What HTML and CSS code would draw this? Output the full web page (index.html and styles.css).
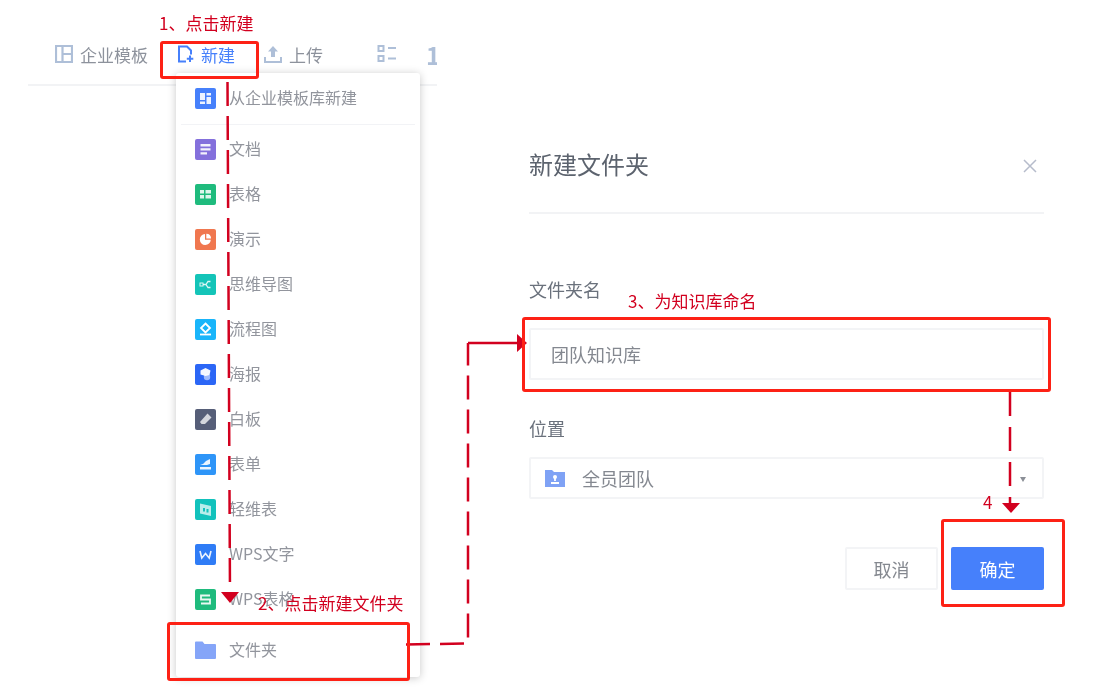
FILE: index.html
```html
<!DOCTYPE html>
<html lang="zh-CN">
<head>
  <meta charset="UTF-8">
  <title>新建文件夹</title>
  <link rel="stylesheet" href="styles.css">
</head>
<body>
<div class="stage">
  <div class="app">
    <!-- Left: toolbar and dropdown -->
    <section class="left">
      <div class="toolbar">
        <span class="tool">
          <svg width="18" height="18" viewBox="0 0 18 18"><path d="M1 1h16v16H1zM7.500 1v16M7.500 9H17" fill="none" stroke="#aebfd8" stroke-width="2.200"/></svg>
          企业模板
        </span>
        <span class="tool tool-new">
          <svg width="18" height="18" viewBox="0 0 18 18"><path d="M9 16.500H2V1.500h8l4 4v4" fill="none" stroke="#4680fb" stroke-width="2"/><path d="M13 10.500v6.500M9.800 13.700h6.500" stroke="#4680fb" stroke-width="2"/></svg>
          新建
        </span>
        <span class="tool tool-upload">
          <svg width="18" height="18" viewBox="0 0 18 18"><path d="M9 1l5 5.500h-3V12H7V6.500H4z" fill="#aebfd8"/><path d="M1 12v5h16v-5" fill="none" stroke="#aebfd8" stroke-width="2"/></svg>
          上传
        </span>
        <i class="tool-sep"></i>
        <svg class="tool-list" width="20" height="20" viewBox="0 0 20 20"><path d="M1.500 2h5v5h-5zM1.500 12h5v5h-5z" fill="none" stroke="#aebfd8" stroke-width="2"/><path d="M11 4h8M11 14.500h8" stroke="#aebfd8" stroke-width="2.200"/></svg>
        <span class="tool-sort">1</span>
      </div>

      <div class="menu">
        <div class="menu-row">
          <svg class="tile" viewBox="0 0 21 21"><rect width="21" height="21" rx="2" fill="#4680fb"/><path d="M5 5h5v7H5zM5 13.500h5V16H5zM11.500 5H16v2.500h-4.500zM11.500 9H16v7h-4.500z" fill="#fff" opacity=".9"/></svg>
          从企业模板库新建
        </div>
        <div class="menu-line"></div>
        <div class="menu-row">
          <svg class="tile" viewBox="0 0 21 21"><rect width="21" height="21" rx="2" fill="#8470dc"/><path d="M5.500 5h10v2.500h-10zM5.500 9.300h10v2.200h-10zM5.500 13.300h6.500v2.200H5.500z" fill="#fff" opacity=".9"/></svg>
          文档
        </div>
        <div class="menu-row">
          <svg class="tile" viewBox="0 0 21 21"><rect width="21" height="21" rx="2" fill="#1fbb7d"/><path d="M5 6h4v3.500H5zM10.500 6H16v3.500h-5.500zM5 11h4v3.500H5zM10.500 11H16v3.500h-5.500z" fill="#fff" opacity=".85"/></svg>
          表格
        </div>
        <div class="menu-row">
          <svg class="tile" viewBox="0 0 21 21"><rect width="21" height="21" rx="2" fill="#f0774f"/><path d="M10 5a5.500 5.500 0 1 0 5.800 5.800H10zM11.300 4.700v4.800h4.800a5 5 0 0 0-4.800-4.800z" fill="#fff"/></svg>
          演示
        </div>
        <div class="menu-row">
          <svg class="tile" viewBox="0 0 21 21"><rect width="21" height="21" rx="2" fill="#14c4b8"/><path d="M8 10.500h3M11 10.500l2-3h2.500M11 10.500l2 3h2.500" fill="none" stroke="#fff" stroke-width="1.300" opacity=".85"/><rect x="5" y="9" width="3" height="3" fill="none" stroke="#fff" opacity=".85"/></svg>
          思维导图
        </div>
        <div class="menu-row">
          <svg class="tile" viewBox="0 0 21 21"><rect width="21" height="21" rx="2" fill="#19b5fa"/><path d="M10.500 4.500l4.500 4.500-4.500 4.500L6 9z" fill="none" stroke="#fff" stroke-width="1.800"/><path d="M5 15.500h11" stroke="#fff" stroke-width="1.800"/></svg>
          流程图
        </div>
        <div class="menu-row">
          <svg class="tile" viewBox="0 0 21 21"><rect width="21" height="21" rx="2" fill="#2b66f6"/><path d="M5.500 6.500l5-2.500 5 2.500-1 4.500-4 1-5-1.500z" fill="#fff" opacity=".95"/><circle cx="12" cy="13" r="3.200" fill="#fff" opacity=".55"/></svg>
          海报
        </div>
        <div class="menu-row">
          <svg class="tile" viewBox="0 0 21 21"><rect width="21" height="21" rx="2" fill="#565e78"/><path d="M12.500 4.500l4 4-6.500 6.500H6.500l-1.500-2z" fill="#fff" opacity=".75"/></svg>
          白板
        </div>
        <div class="menu-row">
          <svg class="tile" viewBox="0 0 21 21"><rect width="21" height="21" rx="2" fill="#2e95f8"/><path d="M5 11l3-1 3-3 4-2v5l-3 1H5zM5 13h11v2.500H5z" fill="#fff" opacity=".9"/></svg>
          表单
        </div>
        <div class="menu-row">
          <svg class="tile" viewBox="0 0 21 21"><rect width="21" height="21" rx="2" fill="#12c2bc"/><path d="M5 4.500l11 2.500v10L5 14.500z" fill="#fff" opacity=".7"/><path d="M8 9h2v3.500H8zM11.500 10h2v3.500h-2z" fill="#12c2bc"/></svg>
          轻维表
        </div>
        <div class="menu-row">
          <svg class="tile" viewBox="0 0 21 21"><rect width="21" height="21" rx="2" fill="#2f7cf6"/><path d="M5 7l1.800 7 3.700-4.500 3.700 4.500L16 7" fill="none" stroke="#fff" stroke-width="1.600" opacity=".9"/></svg>
          WPS文字
        </div>
        <div class="menu-row">
          <svg class="tile" viewBox="0 0 21 21"><rect width="21" height="21" rx="2" fill="#1fbb7d"/><path d="M15 6.500H6v4h9v4H6" fill="none" stroke="#fff" stroke-width="1.800" opacity=".9"/></svg>
          WPS表格
        </div>
        <div class="menu-row menu-folder">
          <svg class="tile" viewBox="0 0 21 21"><path d="M0 2.500a1 1 0 0 1 1-1h6.500l2 2.500H20a1 1 0 0 1 1 1v13a1 1 0 0 1-1 1H1a1 1 0 0 1-1-1z" fill="#85a5f8"/></svg>
          文件夹
        </div>
      </div>
    </section>

    <!-- Right: new folder dialog -->
    <section class="dialog">
      <div class="dialog-head">
        <h2>新建文件夹</h2>
        <svg class="close" width="16" height="16" viewBox="0 0 16 16"><path d="M2 2l12 12M14 2L2 14" stroke="#b6bccb" stroke-width="1.500"/></svg>
      </div>
      <div class="field-label field-name">文件夹名</div>
      <div class="input input-name">团队知识库</div>
      <div class="field-label field-place">位置</div>
      <div class="input input-place">
        <svg width="20" height="18" viewBox="0 0 20 18"><path d="M0 1h7l2 2h11v15H0z" fill="#7fa2f5"/><circle cx="10" cy="8" r="2" fill="#fff"/><path d="M10 8v4M6 14h8" stroke="#fff" stroke-width="1.800"/></svg>
        <span class="place-text">全员团队</span>
        <i class="caret"></i>
      </div>
      <div class="actions">
        <button class="btn">取消</button>
        <button class="btn btn-primary">确定</button>
      </div>
    </section>
  </div>

  <!-- Red tutorial annotations -->
  <svg class="arrows" width="1112" height="696" viewBox="0 0 1112 696">
    <g fill="none" stroke="#d2001f" stroke-width="2.500">
      <path d="M227.500 82L230 594" stroke-dasharray="24 10"/>
      <path d="M406 644.500L468 643.500V343" stroke-dasharray="24 10"/>
      <path d="M468 343H518"/>
      <path d="M1010 392V505" stroke-dasharray="24 11"/>
    </g>
    <g fill="#d2001f">
      <path d="M221 592h18l-9 11z"/>
      <path d="M517 334l10 9-10 9z"/>
      <path d="M1002 503h18l-9 10z"/>
    </g>
  </svg>
  <div class="mark mark-new"></div>
  <div class="mark mark-folder"></div>
  <div class="mark mark-input"></div>
  <div class="mark mark-ok"></div>
  <span class="note note-1">1、点击新建</span>
  <span class="note note-2">2、点击新建文件夹</span>
  <span class="note note-3">3、为知识库命名</span>
  <span class="note note-4">4</span>
</div>
</body>
</html>
```

FILE: styles.css
```css
* {
  margin: 0;
  padding: 0;
  box-sizing: border-box;
}

body {
  background-color: #fff;
  font-family: "Noto Sans CJK SC", "Noto Sans", sans-serif;
  overflow: hidden;
}

.stage {
  position: relative;
  width: 1112px;
  height: 696px;
}

.app {
  display: flex;
  height: 100%;
  filter: blur(0.5px);
}

/* Toolbar */
.left {
  position: relative;
  width: 529px;
  padding: 0 92px 0 28px;
}

.toolbar {
  display: flex;
  align-items: center;
  height: 86px;
  padding: 24px 0 0 27px;
  border-bottom: 2px solid #f2f3f5;
  overflow: hidden;
  color: #8d929c;
  font-size: 17px;
}

.tool {
  display: flex;
  align-items: center;
  gap: 7px;
  white-space: nowrap;
}

.tool-new {
  margin-left: 29px;
  gap: 6px;
  color: #4680fb;
}

.tool-upload {
  margin-left: 29px;
}

.tool-sep {
  width: 2px;
  height: 22px;
  margin-left: 27px;
  background-color: #e6e8ec;
}

.tool-list {
  margin-left: 27px;
  flex: none;
}

.tool-sort {
  margin-left: 29px;
  color: #aebfd8;
  font-size: 24px;
  font-weight: 700;
}

/* Dropdown menu */
.menu {
  position: absolute;
  left: 176px;
  top: 73px;
  width: 244px;
  height: 604px;
  padding-top: 3px;
  background-color: #fff;
  border-radius: 3px;
  box-shadow: 0 1px 8px rgba(0, 0, 0, 0.22);
  color: #92959d;
  font-size: 16px;
}

.menu-row {
  display: flex;
  align-items: center;
  gap: 13px;
  height: 45px;
  padding-left: 19px;
  padding-bottom: 3px;
}

.menu-line {
  height: 1px;
  margin: 3px 5px 2px;
  background-color: #f2f3f6;
}

.menu-folder {
  margin-top: 6px;
}

.tile {
  width: 21px;
  height: 21px;
  margin-top: 3px;
  flex: none;
}

/* Dialog */
.dialog {
  width: 515px;
  color: #6a717c;
}

.dialog-head {
  display: flex;
  justify-content: space-between;
  align-items: center;
  height: 214px;
  padding: 131px 6px 15px 0;
  border-bottom: 2px solid #f2f3f5;
}

.dialog-head h2 {
  font-size: 24px;
  font-weight: 400;
  line-height: 36px;
  color: #5c636e;
}

.close {
  margin-top: 3px;
}

.field-label {
  font-size: 18px;
  line-height: 26px;
}

.field-name {
  margin-top: 62px;
}

.input {
  display: flex;
  align-items: center;
  border: 2px solid #f3f4f6;
  border-radius: 2px;
  color: #848890;
  font-size: 18px;
}

.input-name {
  height: 52px;
  margin-top: 26px;
  padding-left: 20px;
}

.field-place {
  margin-top: 35px;
}

.input-place {
  position: relative;
  height: 42px;
  margin-top: 16px;
  padding-left: 14px;
}

.place-text {
  margin-left: 17px;
}

.caret {
  position: absolute;
  right: 16px;
  top: 18px;
  border-left: 3.500px solid transparent;
  border-right: 3.500px solid transparent;
  border-top: 5px solid #8b8f97;
}

.actions {
  display: flex;
  justify-content: flex-end;
  gap: 13px;
  margin-top: 48px;
}

.btn {
  width: 93px;
  height: 43px;
  background-color: #fff;
  border: 2px solid #f3f4f6;
  border-radius: 2px;
  color: #84888f;
  font-family: inherit;
  font-size: 18px;
}

.btn-primary {
  background-color: #4680fb;
  border-color: #4680fb;
  color: #fff;
}

/* Annotations */
.arrows {
  position: absolute;
  left: 0;
  top: 0;
}

.mark {
  position: absolute;
  border: 3px solid #fd2115;
  border-radius: 3px;
}

.mark-new {
  left: 160px;
  top: 41px;
  width: 99px;
  height: 38px;
}

.mark-folder {
  left: 167px;
  top: 622px;
  width: 243px;
  height: 59px;
}

.mark-input {
  left: 522px;
  top: 317px;
  width: 529px;
  height: 75px;
}

.mark-ok {
  left: 941px;
  top: 519px;
  width: 124px;
  height: 88px;
}

.note {
  position: absolute;
  color: #d2001f;
  font-size: 17px;
  line-height: 22px;
  white-space: nowrap;
  filter: blur(0.25px);
}

.note-1 {
  left: 159px;
  top: 12px;
}

.note-2 {
  left: 258px;
  top: 592px;
}

.note-3 {
  left: 628px;
  top: 290px;
}

.note-4 {
  left: 983px;
  top: 491px;
}
```
